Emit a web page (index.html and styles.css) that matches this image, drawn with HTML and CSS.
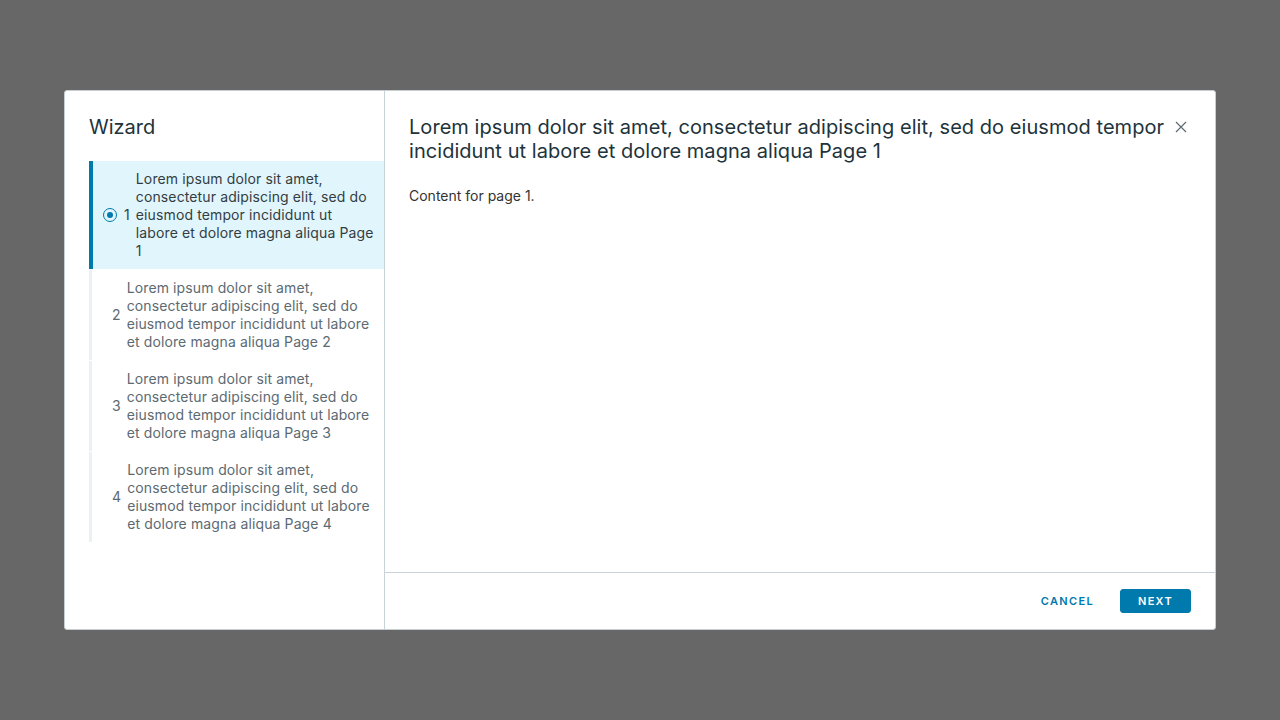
FILE: index.html
```html
<!DOCTYPE html>
<html lang="en">
<head>
<meta charset="utf-8">
<title>Wizard</title>
<link rel="stylesheet" href="styles.css">
</head>
<body>
<div class="backdrop">
  <div class="modal">
    <nav class="nav">
      <h2 class="nav-title">Wizard</h2>
      <ol class="steps">
        <li class="step active">
          <span class="radio"><span class="dot"></span></span>
          <span class="num">1</span>
          <span class="label">Lorem ipsum dolor sit amet, consectetur adipiscing elit, sed do eiusmod tempor incididunt ut labore et dolore magna aliqua Page 1</span>
        </li>
        <li class="step">
          <span class="num">2</span>
          <span class="label">Lorem ipsum dolor sit amet, consectetur adipiscing elit, sed do eiusmod tempor incididunt ut labore et dolore magna aliqua Page 2</span>
        </li>
        <li class="step">
          <span class="num">3</span>
          <span class="label">Lorem ipsum dolor sit amet, consectetur adipiscing elit, sed do eiusmod tempor incididunt ut labore et dolore magna aliqua Page 3</span>
        </li>
        <li class="step">
          <span class="num">4</span>
          <span class="label">Lorem ipsum dolor sit amet, consectetur adipiscing elit, sed do eiusmod tempor incididunt ut labore et dolore magna aliqua Page 4</span>
        </li>
      </ol>
    </nav>
    <section class="pane">
      <header class="pane-header">
        <h1 class="pane-title">Lorem ipsum dolor sit amet, consectetur adipiscing elit, sed do eiusmod tempor incididunt ut labore et dolore magna aliqua Page 1</h1>
        <button class="close" aria-label="Close">
          <svg width="12" height="12" viewBox="0 0 12 12"><path d="M1 1L11 11M11 1L1 11" stroke="#5f6b73" stroke-width="1.2" fill="none"/></svg>
        </button>
      </header>
      <div class="pane-body">
        <p>Content for page 1.</p>
      </div>
      <footer class="pane-footer">
        <button class="btn btn-link">Cancel</button>
        <button class="btn btn-primary">Next</button>
      </footer>
    </section>
  </div>
</div>
</body>
</html>
```
FILE: styles.css
```css
* { box-sizing: border-box; }
html, body { margin: 0; padding: 0; }
body {
  font-family: "Inter", "Noto Sans", sans-serif;
  background: #666766;
  width: 1280px;
  height: 720px;
  overflow: hidden;
}
.backdrop {
  width: 1280px;
  height: 720px;
  display: flex;
  align-items: center;
  justify-content: center;
}
.modal {
  width: 1152px;
  height: 540px;
  background: #fff;
  border: 1px solid #c5ced3;
  border-radius: 3px;
  display: flex;
  overflow: hidden;
}
.nav {
  width: 320px;
  flex: none;
  border-right: 1px solid #c8d4da;
  padding: 24px 0 0 24px;
}
.nav-title {
  margin: 0 0 22px;
  font-size: 20px;
  line-height: 24px;
  font-weight: 400;
  color: #21333b;
}
.steps {
  list-style: none;
  margin: 0;
  padding: 0;
  display: flex;
  flex-direction: column;
  gap: 1px;
}
.step {
  display: flex;
  align-items: center;
  border-left: 3px solid #e9f1f5;
  padding: 9px 8px 9px 20px;
  font-size: 14px;
  line-height: 18px;
  letter-spacing: 0.12px;
  color: #5c6a72;
}
.step.active {
  background: #e1f5fd;
  border-left: 4px solid #0079ad;
  padding-left: 10px;
  padding-right: 7px;
  color: #333d42;
}
.radio {
  width: 14px;
  height: 14px;
  border: 1.5px solid #0079ad;
  border-radius: 50%;
  display: flex;
  align-items: center;
  justify-content: center;
  flex: none;
  margin-right: 7px;
}
.dot {
  width: 6px;
  height: 6px;
  border-radius: 50%;
  background: #0079ad;
}
.num {
  flex: none;
  margin-right: 6px;
}
.label { flex: 1; }
.pane {
  flex: 1;
  display: flex;
  flex-direction: column;
  min-width: 0;
}
.pane-header {
  display: flex;
  align-items: flex-start;
  padding: 24px 24px 0 24px;
}
.pane-title {
  flex: 1;
  margin: 0;
  font-size: 20px;
  line-height: 24px;
  font-weight: 400;
  letter-spacing: 0.05px;
  color: #21333b;
}
.close {
  flex: none;
  border: 0;
  background: none;
  padding: 6px 4px 0 10px;
  cursor: pointer;
}
.pane-body {
  flex: 1;
  padding: 24px 24px 0;
}
.pane-body p {
  margin: 0;
  font-size: 14px;
  line-height: 18px;
  color: #333;
}
.pane-footer {
  border-top: 1px solid #c8d4da;
  display: flex;
  justify-content: flex-end;
  align-items: center;
  gap: 13px;
  padding: 16px 24px 16px;
}
.btn {
  font-family: inherit;
  height: 24px;
  padding: 0 12px;
  font-size: 11px;
  font-weight: 600;
  letter-spacing: 0.12em;
  text-transform: uppercase;
  border-radius: 3px;
  border: 1px solid transparent;
  cursor: pointer;
}
.btn-link {
  background: none;
  color: #0079ad;
}
.btn-primary {
  background: #0079ad;
  color: #fff;
  padding: 0 17px;
  border-color: #0079ad;
}
```
